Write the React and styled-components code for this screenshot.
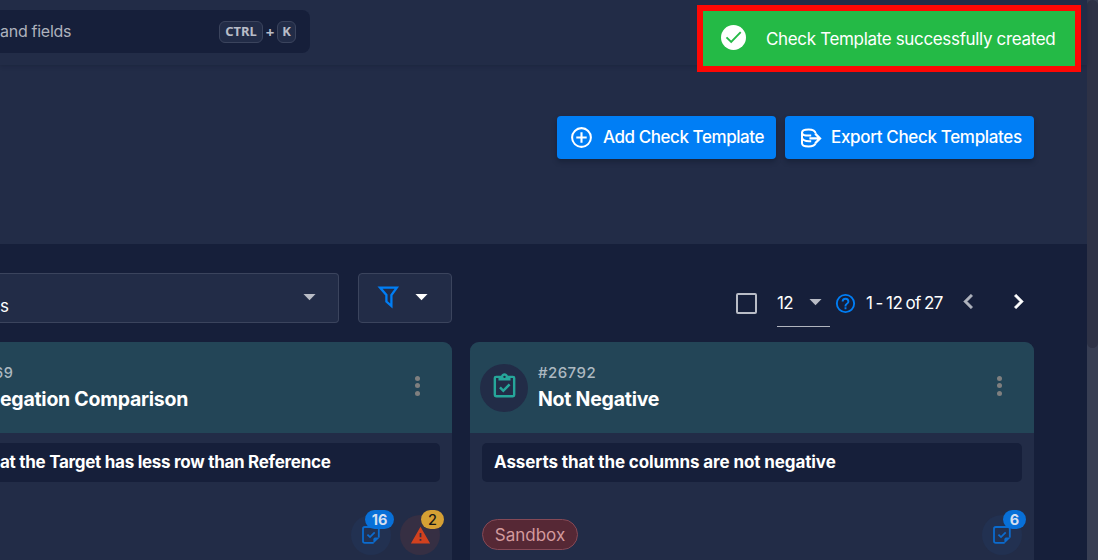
import React from "react";
import styled, { createGlobalStyle } from "styled-components";

const GlobalStyle = createGlobalStyle`
  * { box-sizing: border-box; }
  body { margin: 0; background: #161f3a; overflow: hidden; font-family: Inter, "Noto Sans", sans-serif; }
`;

const Screen = styled.div`
  position: relative;
  display: flex;
  width: 1098px;
  height: 560px;
  overflow: hidden;
  color: #fff;
`;

const Main = styled.main`
  width: 1087px;
  display: flex;
  flex-direction: column;
`;

const ScrollTrack = styled.div`
  width: 11px;
  background: #383e53;
`;

const ScrollThumb = styled.div`
  height: 348px;
  background: #2e3246;
  border-radius: 6px;
`;

const Label = styled.span`
  display: block;
  white-space: nowrap;
  font-size: ${(p) => p.$size || 17}px;
  font-weight: ${(p) => p.$weight || 500};
  letter-spacing: ${(p) => p.$track || 0}px;
  word-spacing: ${(p) => p.$words || 0}px;
  color: ${(p) => p.$color || "#fff"};
  line-height: 24px;
`;

const TopBar = styled.header`
  flex: none;
  height: 65px;
  padding-top: 10px;
  background: #222c47;
  box-shadow: 0 1px 4px rgba(16, 22, 42, 0.3);
  z-index: 1;
`;

const SearchBox = styled.div`
  width: 310px;
  height: 43px;
  display: flex;
  align-items: center;
  justify-content: space-between;
  padding-right: 14px;
  background: #161f3a;
  border-radius: 0 8px 8px 0;
  > span { margin-top: -2px; }
`;

const Shortcut = styled.div`
  display: flex;
  align-items: center;
  gap: 2px;
  font: 700 13px/18px "Noto Sans", sans-serif;
  color: #b9bdc8;
`;

const Plus = styled.span`
  width: 10px;
  font-size: 15px;
  text-align: center;
`;

const Key = styled.kbd`
  width: ${(p) => p.$width}px;
  height: 22px;
  border: 1px solid #3b445d;
  border-radius: 6px;
  background: #222c47;
  font: inherit;
  text-align: center;
`;

const Hero = styled.section`
  flex: none;
  height: 179px;
  display: flex;
  justify-content: flex-end;
  align-items: flex-start;
  gap: 9px;
  padding: 51px 53px 0 0;
  background: #222c47;
`;

const ActionButton = styled.button`
  width: ${(p) => p.$width}px;
  height: 43px;
  display: flex;
  align-items: center;
  gap: ${(p) => p.$gap}px;
  padding: 0 0 0 12px;
  border: 0;
  border-radius: 4px;
  background: #007ef5;
  font-family: inherit;
  box-shadow: 0 3px 5px rgba(10, 16, 34, 0.35);
  span { margin-top: -1px; }
`;

const Content = styled.section`
  flex: 1;
  padding: 29px 53px 0 0;
`;

const Toolbar = styled.div`
  height: 50px;
  display: flex;
  > * { flex: none; }
`;

const SelectField = styled.div`
  width: 339px;
  display: flex;
  justify-content: space-between;
  padding-right: 14px;
  border: 1px solid #3b445d;
  border-left: 0;
  border-radius: 0 4px 4px 0;
  background: #222c47;
  svg { margin-top: 8px; }
  span { padding-top: 20px; }
`;

const FilterButton = styled.div`
  width: 94px;
  margin-left: 19px;
  display: flex;
  padding: 11px 0 0 18px;
  gap: 6px;
  border: 1px solid #3b445d;
  border-radius: 4px;
  background: #222c47;
  svg { flex: none; }
  svg + svg { margin-top: -3px; }
`;

const Pager = styled.div`
  display: flex;
  align-items: flex-start;
  margin-left: 284px;
`;

const Checkbox = styled.span`
  width: 21px;
  height: 21px;
  margin-top: 20px;
  border: 2px solid #b9bcc6;
  border-radius: 2px;
`;

const PageSize = styled.div`
  width: 53px;
  height: 54px;
  margin: 0 4px 0 20px;
  display: flex;
  justify-content: space-between;
  padding-top: 18px;
  border-bottom: 1px solid #b0b4be;
  svg { flex: none; margin: -4px 0 0 0; }
`;

const PagerItem = styled.div`
  margin: ${(p) => p.$top}px 0 0 ${(p) => p.$left || 0}px;
  line-height: 0;
`;

const Cards = styled.div`
  display: flex;
  gap: 18px;
  margin-top: 19px;
`;

const Card = styled.article`
  width: ${(p) => p.$width}px;
  height: 230px;
  overflow: hidden;
  flex: none;
  border-radius: ${(p) => (p.$cut ? "0 9px 0 0" : "9px 9px 0 0")};
  background: #222c47;
`;

const CardHead = styled.div`
  height: 91px;
  display: flex;
  background: #234557;
`;

const Avatar = styled.div`
  width: 48px;
  height: 48px;
  margin: 22px 10px 0 10px;
  padding: 0 0 3px 0;
  display: grid;
  place-items: center;
  border-radius: 50%;
  background: #222c47;
`;

const Titles = styled.div`
  flex: 1;
  padding-top: 19px;
  span + span { margin-top: 2px; }
`;

const CutNumber = styled.div`
  margin: 0 0 2px -6px;
`;

const Kebab = styled.div`
  display: flex;
  flex-direction: column;
  gap: 2.4px;
  margin: 34px 32px 0 0;
  i { width: 5px; height: 5px; border-radius: 50%; background: #7f7f7f; }
`;

const Description = styled.div`
  height: 39px;
  margin: 10px 12px 0 ${(p) => (p.$cut ? 0 : 12)}px;
  padding: 7px 0 0 ${(p) => (p.$cut ? 0 : 12)}px;
  border-radius: ${(p) => (p.$cut ? "0 5px 5px 0" : "5px")};
  background: #161f3a;
`;

const CardFoot = styled.div`
  display: flex;
  justify-content: flex-end;
  gap: 9px;
  padding: 33px 12px 0 12px;
`;

const Chip = styled.div`
  width: 96px;
  height: 31px;
  margin: 4px auto 0 0;
  padding-top: 3px;
  display: flex;
  justify-content: center;
  border: 1px solid #854956;
  border-radius: 16px;
  background: #562835;
`;

const Counter = styled.div`
  position: relative;
  width: 40px;
  height: 40px;
  display: grid;
  place-items: center;
  border-radius: 50%;
  background: ${(p) => p.$tint};
`;

const Badge = styled.b`
  position: absolute;
  top: -5px;
  left: ${(p) => p.$left}px;
  width: ${(p) => p.$width}px;
  height: 19px;
  border-radius: 10px;
  background: ${(p) => p.$bg};
  color: ${(p) => p.$fg};
  font-size: 14.5px;
  font-weight: ${(p) => p.$weight || 700};
  line-height: 19px;
  text-align: center;
`;

const Toast = styled.div`
  position: absolute;
  z-index: 2;
  top: 5px;
  left: 697px;
  width: 384px;
  height: 67px;
  display: flex;
  align-items: flex-start;
  padding: 14px 0 0 18px;
  border: 6px solid #fe0804;
  background: #24ba46;
  span { margin: 2px 0 0 20px; }
`;

const paths = {
  plus: "M12,20C7.59,20 4,16.41 4,12C4,7.59 7.59,4 12,4C16.41,4 20,7.59 20,12C20,16.41 16.41,20 12,20M12,2A10,10 0 0,0 2,12A10,10 0 0,0 12,22A10,10 0 0,0 22,12A10,10 0 0,0 12,2M13,7H11V11H7V13H11V17H13V13H17V11H13V7Z",
  help: "M11,18H13V16H11V18M12,2A10,10 0 0,0 2,12A10,10 0 0,0 12,22A10,10 0 0,0 22,12A10,10 0 0,0 12,2M12,20C7.59,20 4,16.41 4,12C4,7.59 7.59,4 12,4C16.41,4 20,7.59 20,12C20,16.41 16.41,20 12,20M12,6A4,4 0 0,0 8,10H10A2,2 0 0,1 12,8A2,2 0 0,1 14,10C14,12 11,11.75 11,15H13C13,12.75 16,12.5 16,10A4,4 0 0,0 12,6Z",
  caret: "M7,10L12,15L17,10H7Z",
  left: "M15.41,16.58L10.83,12L15.41,7.41L14,6L8,12L14,18L15.41,16.58Z",
  right: "M8.59,16.58L13.17,12L8.59,7.41L10,6L16,12L10,18L8.59,16.58Z",
  clipboard: "M19,3H14.82C14.4,1.84 13.3,1 12,1C10.7,1 9.6,1.84 9.18,3H5A2,2 0 0,0 3,5V19A2,2 0 0,0 5,21H19A2,2 0 0,0 21,19V5A2,2 0 0,0 19,3M12,3A1,1 0 0,1 13,4A1,1 0 0,1 12,5A1,1 0 0,1 11,4A1,1 0 0,1 12,3M7,7H17V5H19V19H5V5H7V7M7.5,13.5L9,12L11,14L15.5,9.5L17,11L11,17L7.5,13.5Z",
  alert: "M13 14H11V9H13M13 18H11V16H13M1 21H23L12 2L1 21Z",
};

const Icon = ({ name, size = 29, color = "#fff", weight = 0 }) => (
  <svg width={size} height={size} viewBox="0 0 24 24" fill={color} stroke={color} strokeWidth={weight}><path d={paths[name]} /></svg>
);

const ExportIcon = () => (
  <svg width="25" height="22" viewBox="0 0 25 22" fill="none" stroke="#fff" strokeWidth="2">
    <path d="M18.6 6.4C18.2 3.6 15.2 2.4 11.6 2.4C7.6 2.4 5 3.6 5 5.4C5 7.3 7.6 8.6 11.6 8.6H14.2" />
    <path d="M5 5.4V16.2C5 18.2 8 19.4 11.6 19.4C15 19.4 17.8 18.6 18.6 16.4M5 10.8C5.6 13 8.4 14.2 12 14.2H14.2" />
    <path d="M12.4 11.4H22.6M18.2 6.6L23 11.4L18.2 16.2" strokeWidth="2.3" />
  </svg>
);

const FunnelIcon = () => (
  <svg width="24" height="24" viewBox="0 0 24 24" fill="none" stroke="#007ef5" strokeWidth="2.3">
    <path d="M3 2.6H19.8L14.4 10V21L9.4 16.6V10Z" />
  </svg>
);

const NoteIcon = () => (
  <svg width="20" height="20" viewBox="0 0 20 20" fill="none" stroke="#0b6bce" strokeWidth="1.8">
    <path d="M12.6 17.8H3.8Q2 17.8 2 16V3.8Q2 2 3.8 2H16Q17.8 2 17.8 3.8V12.6" />
    <path d="M12.4 18.6V14.2Q12.4 12.6 14 12.6H18.6Z" fill="#0b6bce" stroke="none" />
    <path d="M6.4 9.6L9 12.1L13.7 7.4" />
  </svg>
);

const ToastIcon = () => (
  <svg width="25" height="25" viewBox="0 0 25 25">
    <circle cx="12.5" cy="12.5" r="12.5" fill="#fff" />
    <path d="M5.5 12.4L10.2 17L19.7 7.2" fill="none" stroke="#24ba46" strokeWidth="1.9" />
  </svg>
);

const Dots = () => <Kebab><i /><i /><i /></Kebab>;

export default function App() {
  return (
    <Screen>
      <GlobalStyle />
      <Main>
        <TopBar>
          <SearchBox>
            <Label $size={16} $weight={400} $track={-0.28} $color="#aeb2bd">and fields</Label>
            <Shortcut><Key $width={44}>CTRL</Key><Plus>+</Plus><Key $width={19}>K</Key></Shortcut>
          </SearchBox>
        </TopBar>
        <Hero>
          <ActionButton $width={219} $gap={9}>
            <Icon name="plus" size={25} />
            <Label $track={-0.44}>Add Check Template</Label>
          </ActionButton>
          <ActionButton $width={249} $gap={9}>
            <ExportIcon />
            <Label $track={-0.34}>Export Check Templates</Label>
          </ActionButton>
        </Hero>
        <Content>
          <Toolbar>
            <SelectField>
              <Label $weight={400}>s</Label>
              <Icon name="caret" color="#b9bcc6" />
            </SelectField>
            <FilterButton>
              <FunnelIcon />
              <Icon name="caret" />
            </FilterButton>
            <Pager>
              <Checkbox />
              <PageSize>
                <Label $weight={400} $track={-0.7}>12</Label>
                <Icon name="caret" color="#b9bcc6" />
              </PageSize>
              <PagerItem $top={19}><Icon name="help" size={23} color="#007ef5" /></PagerItem>
              <PagerItem $top={18} $left={9}><Label $weight={400} $track={-0.6} $words={-0.9}>1 - 12 of 27</Label></PagerItem>
              <PagerItem $top={14} $left={11}><Icon name="left" color="#b0b4be" weight={0.5} /></PagerItem>
              <PagerItem $top={14} $left={21}><Icon name="right" weight={0.5} /></PagerItem>
            </Pager>
          </Toolbar>
          <Cards>
            <Card $width={452} $cut>
              <CardHead>
                <Titles>
                  <CutNumber><Label $size={14.5} $track={0.5} $color="#adb9c1">69</Label></CutNumber>
                  <Label $size={19.5} $weight={700} $track={-0.26}>egation Comparison</Label>
                </Titles>
                <Dots />
              </CardHead>
              <Description $cut><Label $weight={700} $track={-0.28}>at the Target has less row than Reference</Label></Description>
              <CardFoot>
                <Counter $tint="#223151"><NoteIcon /><Badge $left={14} $width={29} $bg="#0870d8" $fg="#d5dff0">16</Badge></Counter>
                <Counter $tint="#362f43"><Icon name="alert" size={21} color="#d2411e" /><Badge $left={21} $width={23} $bg="#d5a034" $fg="#171717" $weight={500}>2</Badge></Counter>
              </CardFoot>
            </Card>
            <Card $width={564}>
              <CardHead>
                <Avatar><Icon name="clipboard" color="#26a69a" /></Avatar>
                <Titles>
                  <Label $size={15} $track={0.45} $color="#adb9c1">#26792</Label>
                  <Label $size={19.5} $weight={700} $track={-0.24}>Not Negative</Label>
                </Titles>
                <Dots />
              </CardHead>
              <Description><Label $weight={700} $track={-0.1}>Asserts that the columns are not negative</Label></Description>
              <CardFoot>
                <Chip><Label $weight={400} $color="#d39a9d">Sandbox</Label></Chip>
                <Counter $tint="#223151"><NoteIcon /><Badge $left={21} $width={23} $bg="#0870d8" $fg="#d5dff0">6</Badge></Counter>
              </CardFoot>
            </Card>
          </Cards>
        </Content>
      </Main>
      <ScrollTrack><ScrollThumb /></ScrollTrack>
      <Toast><ToastIcon /><Label $weight={400} $track={-0.34}>Check Template successfully created</Label></Toast>
    </Screen>
  );
}
